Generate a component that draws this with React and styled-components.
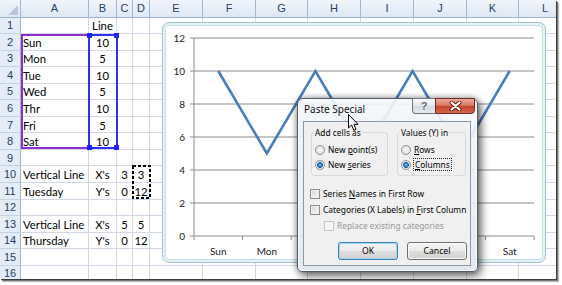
import React from 'react';
import styled, { createGlobalStyle } from 'styled-components';

const GlobalStyle = createGlobalStyle`
  html, body { margin: 0; padding: 0; background: #fff; }
  body { width: 562px; height: 285px; overflow: hidden; }
`;

const COLS = [21, 68, 28, 16, 17, 53, 53, 52, 53, 53, 53, 52, 53];
const LETTERS = ['A', 'B', 'C', 'D', 'E', 'F', 'G', 'H', 'I', 'J', 'K', 'L'];

const Shot = styled.div`
  position: relative;
  width: 556px;
  height: 279px;
  overflow: hidden;
  background: #fff;
  box-shadow: 1px 1px 0 #3c3c3c, 2px 2px 0 #777, 3px 3px 1px #bbb;
  font-family: Lato, 'Liberation Sans', sans-serif;
`;

const Sheet = styled.div`
  display: grid;
  grid-template-columns: ${COLS.map((c) => c + 'px').join(' ')};
  grid-template-rows: 17.5px repeat(16, 16.55px);
`;

const HeadCell = styled.div`
  position: relative;
  box-sizing: border-box;
  display: flex;
  align-items: center;
  justify-content: center;
  background: linear-gradient(#f1f5fb, #dde7f3);
  border-right: 1px solid #9eb6ce;
  border-bottom: 1px solid #9eb6ce;
  color: #27415f;
  font-size: 11px;
  font-family: 'Liberation Sans', Arial, sans-serif;
`;

const Corner = styled(HeadCell)`
  &::after {
    content: '';
    position: absolute;
    right: 2px;
    bottom: 2px;
    border-style: solid;
    border-width: 0 0 10px 10px;
    border-color: transparent transparent #b9c7d8 transparent;
  }
`;

const RowHead = styled(HeadCell)`
  background: #e4ecf7;
  border-bottom: 1px solid #c5d2e2;
  font-size: 11px;
`;

const Cell = styled.div`
  position: relative;
  box-sizing: border-box;
  display: flex;
  align-items: center;
  justify-content: ${(p) => (p.$align === 'left' ? 'flex-start' : 'center')};
  padding: 1px ${(p) => (p.$align === 'left' ? '2px' : '0')} 0;
  border-right: 1px solid #d0d7e5;
  border-bottom: 1px solid #d0d7e5;
  font-size: 11.3px;
  color: #000;
  white-space: nowrap;
`;

const RangeBox = styled.div`
  position: absolute;
  left: ${(p) => p.$left}px;
  top: 0;
  width: ${(p) => p.$w}px;
  height: ${(p) => p.$h}px;
  box-sizing: border-box;
  border: 2px solid ${(p) => p.$color};
  z-index: ${(p) => p.$z};
  pointer-events: none;
`;

const Grip = styled.span`
  position: absolute;
  width: 5px;
  height: 5px;
  background: #2020ff;
  ${(p) => (p.$top ? 'top: -3px;' : 'bottom: -3px;')}
  ${(p) => (p.$leftSide ? 'left: -3px;' : 'right: -3px;')}
`;

const Ants = styled.svg`
  position: absolute;
  left: -1px;
  top: -1px;
  z-index: 3;
  overflow: visible;
`;

/* ---------- chart ---------- */
const ChartBox = styled.div`
  position: absolute;
  left: 162px;
  top: 22px;
  width: 384px;
  height: 241px;
  box-sizing: border-box;
  border: 1px solid #a8c3cb;
  border-radius: 7px;
  background: #fff;
  box-shadow: inset 0 0 0 2px #e2f2f5, inset 0 0 0 3px #c5dfe5;
  z-index: 5;
`;

const Dots = styled.span`
  position: absolute;
  width: ${(p) => p.$w}px;
  height: ${(p) => p.$h}px;
  background-image: radial-gradient(circle, #6f7f8c 45%, transparent 50%);
  background-size: 2px 2px;
`;

const ChartSvg = styled.svg`
  display: block;
  font-family: Lato, 'Liberation Sans', sans-serif;
`;

/* ---------- dialog ---------- */
const Dialog = styled.div`
  position: absolute;
  left: 297px;
  top: 98px;
  width: 181px;
  height: 174px;
  box-sizing: border-box;
  display: flex;
  flex-direction: column;
  border: 1px solid #555b63;
  border-radius: 6px 6px 5px 5px;
  background: linear-gradient(rgba(244, 247, 250, 0.9), rgba(226, 232, 239, 0.93));
  box-shadow: inset 0 0 0 1px rgba(255, 255, 255, 0.7), 3px 4px 10px rgba(0, 0, 0, 0.55),
    0 0 6px rgba(0, 0, 0, 0.35);
  z-index: 10;
  font-family: 'Noto Sans', 'Open Sans', sans-serif;
  color: #000;
`;

const TitleBar = styled.div`
  display: flex;
  align-items: flex-start;
  height: 22px;
`;

const Title = styled.div`
  padding: 3px 0 0 6px;
  font-size: 10px;
  color: #111;
`;

const Caption = styled.div`
  margin: -1px 2px 0 auto;
  display: flex;
`;

const HelpBtn = styled.div`
  width: 23px;
  height: 16px;
  box-sizing: border-box;
  border: 1px solid #6f7883;
  border-right: none;
  border-radius: 0 0 0 4px;
  background: linear-gradient(#f7f9fb 0%, #e3e8ee 48%, #d2d9e1 52%, #e6ebf0 100%);
  display: flex;
  align-items: center;
  justify-content: center;
  font: bold 11px 'Liberation Sans', sans-serif;
  color: #5f656c;
  text-shadow: 0 1px 0 #fff;
`;

const CloseBtn = styled.div`
  width: 40px;
  height: 16px;
  box-sizing: border-box;
  border: 1px solid #6e2a1e;
  border-radius: 0 0 4px 0;
  background: linear-gradient(#eaa99b 0%, #db7b66 45%, #c5452c 52%, #d2654c 100%);
  display: flex;
  align-items: center;
  justify-content: center;
`;

const Client = styled.div`
  flex: 1;
  margin: 0 6px 5px 5px;
  box-sizing: border-box;
  background: #f0f0f0;
  border: 1px solid #8d99a6;
  padding: 5px 0 0 7px;
  display: flex;
  flex-direction: column;
  font-size: 8.4px;
`;

const Groups = styled.div`
  display: flex;
  gap: 9px;
`;

const Group = styled.fieldset`
  margin: 0;
  width: ${(p) => p.$w}px;
  height: 49px;
  box-sizing: border-box;
  border: 1px solid #d3dbe2;
  border-radius: 3px;
  padding: 6px 0 0 3px;
  display: flex;
  flex-direction: column;
  gap: 4px;
`;

const Legend = styled.legend`
  padding: 0 1px;
  margin-left: -1px;
  font-size: 8.4px;
`;

const Option = styled.label`
  display: flex;
  align-items: center;
  gap: 3px;
  height: 11px;
  white-space: nowrap;
  color: ${(p) => (p.$disabled ? '#9a9a9a' : '#000')};
  padding-left: ${(p) => p.$indent || 0}px;
`;

const Focus = styled.span`
  outline: 1px dotted #222;
  outline-offset: 0;
  padding: 0 1px;
`;

const Radio = styled.span`
  width: 10px;
  height: 10px;
  box-sizing: border-box;
  border-radius: 50%;
  border: 1px solid #8a8f95;
  background: ${(p) =>
    p.$checked
      ? 'radial-gradient(circle, #7fc1f0 0%, #1d6fc0 38%, #1a4f8a 48%, #f4f4f4 55%, #dcdcdc 100%)'
      : 'radial-gradient(circle, #fdfdfd 0%, #e4e4e4 60%, #d0d0d0 100%)'};
  flex: none;
`;

const Check = styled.span`
  width: 10px;
  height: 10px;
  box-sizing: border-box;
  border: 1px solid ${(p) => (p.$disabled ? '#c4c4c4' : '#8a8f95')};
  background: ${(p) =>
    p.$disabled ? '#f4f4f4' : 'linear-gradient(135deg, #d6d6d6, #f8f8f8)'};
  box-shadow: inset 0 0 0 1px ${(p) => (p.$disabled ? '#f8f8f8' : '#eeeeee')};
  flex: none;
`;

const Checks = styled.div`
  display: flex;
  flex-direction: column;
  gap: 5px;
  margin: 12px 0 0 -1px;
`;

const Buttons = styled.div`
  display: flex;
  justify-content: flex-end;
  gap: 9px;
  margin: 11px 3px 0 0;
`;

const Button = styled.div`
  width: 60px;
  height: 18px;
  box-sizing: border-box;
  border: 1px solid ${(p) => (p.$default ? '#3c7fb1' : '#707070')};
  border-radius: 3px;
  background: linear-gradient(#f4f4f4 0%, #ececec 48%, #dddddd 52%, #d2d2d2 100%);
  box-shadow: inset 0 0 0 1px ${(p) => (p.$default ? '#9fdbf4' : 'rgba(255,255,255,0.8)')};
  display: flex;
  align-items: center;
  justify-content: center;
  font-size: 8.6px;
`;

const Cursor = styled.svg`
  position: absolute;
  left: 348px;
  top: 114px;
  z-index: 20;
`;

const data = {
  1: { B: 'Line' },
  2: { A: 'Sun', B: '10' },
  3: { A: 'Mon', B: '5' },
  4: { A: 'Tue', B: '10' },
  5: { A: 'Wed', B: '5' },
  6: { A: 'Thr', B: '10' },
  7: { A: 'Fri', B: '5' },
  8: { A: 'Sat', B: '10' },
  10: { A: 'Vertical Line', B: "X's", C: '3', D: '3' },
  11: { A: 'Tuesday', B: "Y's", C: '0', D: '12' },
  13: { A: 'Vertical Line', B: "X's", C: '5', D: '5' },
  14: { A: 'Thursday', B: "Y's", C: '0', D: '12' },
};

function overlay(row, col) {
  if (row === 2 && col === 'A')
    return <RangeBox $color="#8b2fd0" $left={0} $w={69} $h={115} $z={2} />;
  if (row === 2 && col === 'B')
    return (
      <RangeBox $color="#2f2ff5" $left={-1} $w={30} $h={115} $z={3}>
        <Grip $top $leftSide />
        <Grip $top />
        <Grip $leftSide />
        <Grip />
      </RangeBox>
    );
  if (row === 10 && col === 'D')
    return (
      <Ants width="19" height="34">
        <rect x="1" y="1" width="17" height="32" fill="none" stroke="#000" strokeWidth="2" strokeDasharray="3 2" />
      </Ants>
    );
  return null;
}

const days = ['Sun', 'Mon', 'Tue', 'Wed', 'Thr', 'Fri', 'Sat'];
const hidden = { Tue: true, Wed: true, Thr: true, Fri: true };
const vals = [10, 5, 10, 5, 10, 5, 10];
const X0 = 31;
const X1 = 371;
const CW = (X1 - X0) / 7;
const yOf = (v) => 15 + (12 - v) * 16.5;

function Chart() {
  return (
    <ChartBox>
      <Dots $w={4} $h={4} style={{ left: 1, top: 1 }} />
      <Dots $w={4} $h={4} style={{ right: 1, top: 1 }} />
      <Dots $w={4} $h={4} style={{ left: 1, bottom: 1 }} />
      <Dots $w={4} $h={4} style={{ right: 1, bottom: 1 }} />
      <Dots $w={8} $h={2} style={{ left: 186, top: 1 }} />
      <Dots $w={8} $h={2} style={{ left: 186, bottom: 1 }} />
      <Dots $w={2} $h={8} style={{ left: 1, top: 116 }} />
      <Dots $w={2} $h={8} style={{ right: 1, top: 116 }} />
      <ChartSvg width="382" height="239" viewBox="0 0 382 239">
        {[0, 2, 4, 6, 8, 10, 12].map((v) => (
          <g key={v}>
            <line x1={27} x2={X1} y1={yOf(v)} y2={yOf(v)} stroke="#8a8a8a" strokeWidth="1" />
            <text x={22} y={yOf(v) + 3.5} textAnchor="end" fontSize="10" fill="#1a1a1a">
              {v}
            </text>
          </g>
        ))}
        <line x1={X0} x2={X0} y1={yOf(12)} y2={yOf(0) + 4} stroke="#8a8a8a" strokeWidth="1" />
        {days.map((d, i) => (
          <g key={d}>
            <line x1={X0 + (i + 1) * CW} x2={X0 + (i + 1) * CW} y1={yOf(0)} y2={yOf(0) + 4} stroke="#8a8a8a" />
            {!hidden[d] && (
              <text x={X0 + (i + 0.5) * CW} y={232} textAnchor="middle" fontSize="10" fill="#1a1a1a">
                {d}
              </text>
            )}
          </g>
        ))}
        <polyline
          points={vals.map((v, i) => `${X0 + (i + 0.5) * CW},${yOf(v)}`).join(' ')}
          fill="none"
          stroke="#4a7ebb"
          strokeWidth="2.6"
          strokeLinejoin="miter"
        />
      </ChartSvg>
    </ChartBox>
  );
}

function PasteSpecial() {
  return (
    <Dialog>
      <TitleBar>
        <Title>Paste Special</Title>
        <Caption>
          <HelpBtn>?</HelpBtn>
          <CloseBtn>
            <svg width="13" height="10" viewBox="0 0 13 10">
              <path d="M2.5 1.5 L10.5 8.5 M10.5 1.5 L2.5 8.5" stroke="#5a1d12" strokeWidth="4" strokeLinecap="round" />
              <path d="M2.5 1.5 L10.5 8.5 M10.5 1.5 L2.5 8.5" stroke="#fff" strokeWidth="2.2" strokeLinecap="round" />
            </svg>
          </CloseBtn>
        </Caption>
      </TitleBar>
      <Client>
        <Groups>
          <Group $w={77}>
            <Legend>Add cells as</Legend>
            <Option>
              <Radio />
              <span>
                New <u>p</u>oint(s)
              </span>
            </Option>
            <Option>
              <Radio $checked />
              <span>
                New <u>s</u>eries
              </span>
            </Option>
          </Group>
          <Group $w={69}>
            <Legend>Values (Y) in</Legend>
            <Option>
              <Radio />
              <span>
                <u>R</u>ows
              </span>
            </Option>
            <Option>
              <Radio $checked />
              <Focus>
                <u>C</u>olumns
              </Focus>
            </Option>
          </Group>
        </Groups>
        <Checks>
          <Option>
            <Check />
            <span>
              Series <u>N</u>ames in First Row
            </span>
          </Option>
          <Option>
            <Check />
            <span>
              Categories (X Labels) in <u>F</u>irst Column
            </span>
          </Option>
          <Option $disabled $indent={14}>
            <Check $disabled />
            <span>Replace existing categories</span>
          </Option>
        </Checks>
        <Buttons>
          <Button $default>OK</Button>
          <Button>Cancel</Button>
        </Buttons>
      </Client>
    </Dialog>
  );
}

export default function App() {
  const rowNums = Array.from({ length: 16 }, (_, i) => i + 1);
  return (
    <>
      <GlobalStyle />
      <Shot>
        <Sheet>
          <Corner />
          {LETTERS.map((l) => (
            <HeadCell key={l}>{l}</HeadCell>
          ))}
          {rowNums.map((r) => (
            <React.Fragment key={r}>
              <RowHead>{r}</RowHead>
              {LETTERS.map((l) => (
                <Cell key={l} $align={l === 'A' ? 'left' : 'center'}>
                  {data[r] && data[r][l]}
                  {overlay(r, l)}
                </Cell>
              ))}
            </React.Fragment>
          ))}
        </Sheet>
        <Chart />
        <PasteSpecial />
        <Cursor width="12" height="18" viewBox="0 0 12 18">
          <path d="M0.5 0.5 L0.5 14 L3.6 11 L5.8 16.3 L8 15.4 L5.9 10.3 L10 10.3 Z" fill="#fff" stroke="#000" strokeWidth="1" strokeLinejoin="round" />
        </Cursor>
      </Shot>
    </>
  );
}
